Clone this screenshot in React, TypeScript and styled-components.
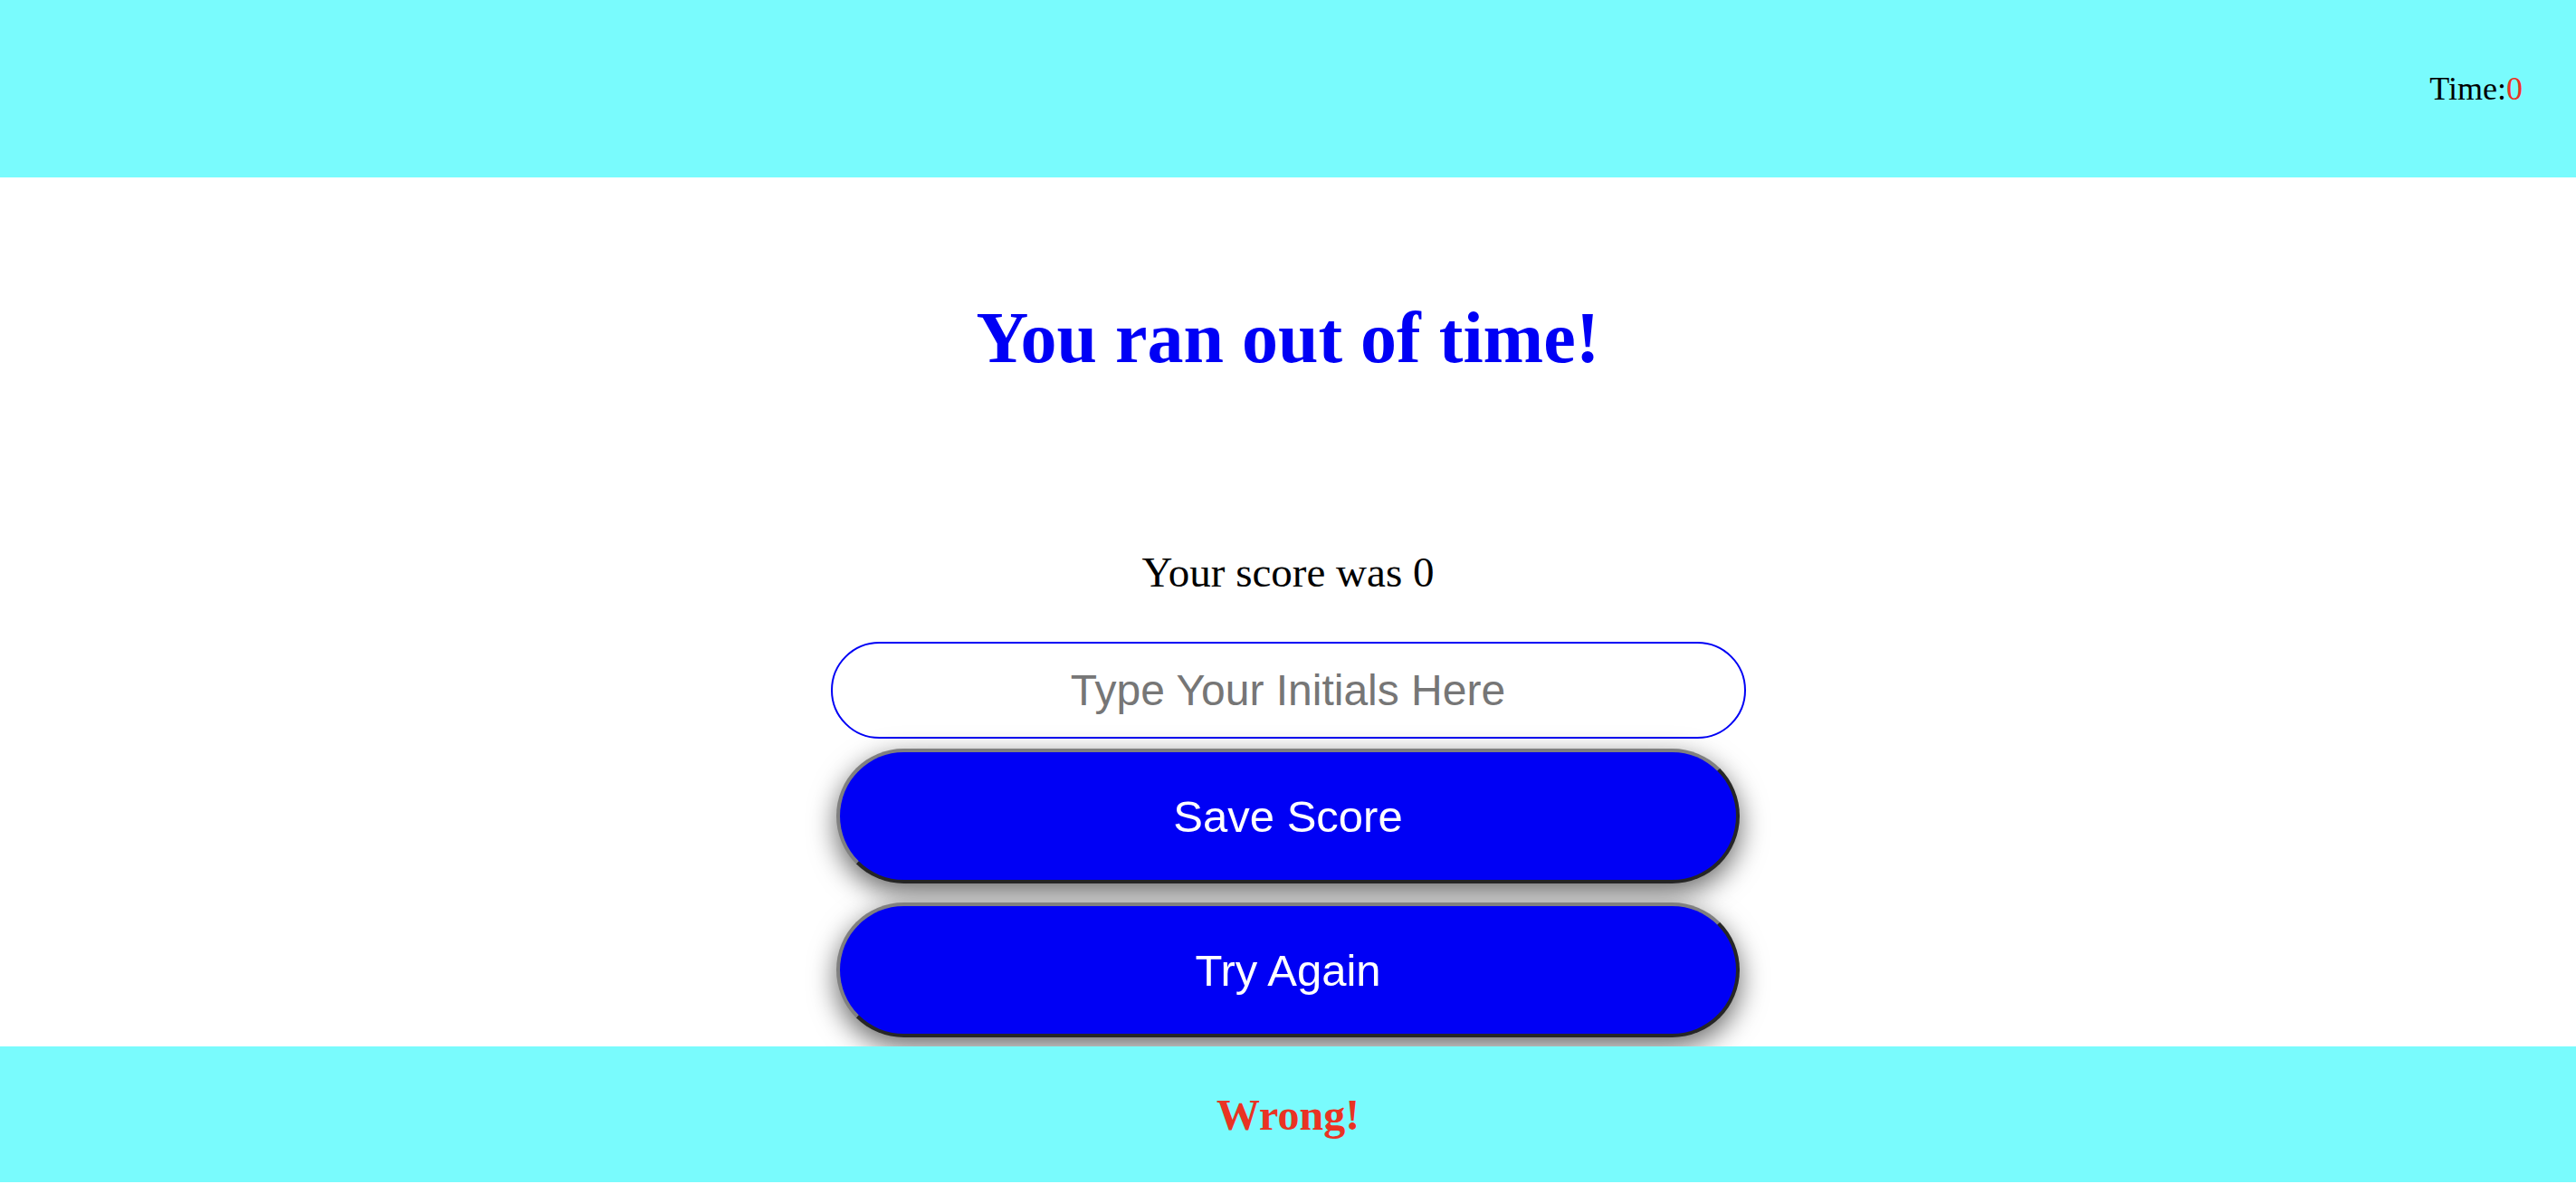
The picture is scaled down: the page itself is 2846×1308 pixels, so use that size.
import React from "react";
import styled, { createGlobalStyle } from "styled-components";

const CYAN = "#79fbfd";
const BLUE = "#0000f5";
const RED = "#ea3323";

const GlobalStyle = createGlobalStyle`
  html, body {
    margin: 0;
    padding: 0;
    background: #ffffff;
  }
  body {
    font-family: "Liberation Serif", "Times New Roman", serif;
  }
`;

const Header = styled.header`
  height: 196px;
  background: ${CYAN};
  display: flex;
  justify-content: flex-end;
  align-items: center;
  padding: 0 59px;
  box-sizing: border-box;
  font-family: "Liberation Serif", "Times New Roman", serif;
  font-size: 36px;
  color: #000;
`;

const TimeValue = styled.span`
  color: ${RED};
`;

const Main = styled.main`
  display: flex;
  flex-direction: column;
  align-items: center;
  padding-bottom: 200px;
`;

const Title = styled.h1`
  margin: 132px 0 0;
  font-family: "Liberation Serif", "Times New Roman", serif;
  font-weight: 700;
  font-size: 80px;
  line-height: normal;
  color: ${BLUE};
`;

const ScoreText = styled.p`
  margin: 186px 0 0;
  font-family: "Liberation Serif", "Times New Roman", serif;
  font-size: 47px;
  line-height: normal;
  color: #000;
`;

const InitialsInput = styled.input`
  margin-top: 50px;
  width: 1011px;
  height: 107px;
  box-sizing: border-box;
  border: 2px solid ${BLUE};
  border-radius: 54px;
  background: #fff;
  font-family: "Liberation Sans", Arial, sans-serif;
  font-size: 48px;
  text-align: center;
  color: #000;
  outline: none;
  &::placeholder {
    color: #767676;
  }
`;

const ActionButton = styled.button<{ $gap: number }>`
  margin-top: ${(p) => p.$gap}px;
  width: 998px;
  height: 149px;
  box-sizing: border-box;
  border-width: 4px;
  border-style: solid;
  border-color: #808080 #262626 #262626 #808080;
  border-radius: 75px;
  background: ${BLUE};
  color: #fff;
  font-family: "Liberation Sans", Arial, sans-serif;
  font-size: 49px;
  box-shadow: 0 10px 30px rgba(0, 0, 0, 0.6);
  cursor: pointer;
  padding: 0;
`;

const Footer = styled.footer`
  position: fixed;
  left: 0;
  right: 0;
  bottom: 2px;
  height: 150px;
  background: ${CYAN};
  display: flex;
  justify-content: center;
  align-items: center;
  font-family: "Liberation Serif", "Times New Roman", serif;
  font-weight: 700;
  font-size: 48px;
  color: ${RED};
`;

export default function App() {
  return (
    <>
      <GlobalStyle />
      <Header>
        <span>
          Time:<TimeValue>0</TimeValue>
        </span>
      </Header>
      <Main>
        <Title>You ran out of time!</Title>
        <ScoreText>Your score was 0</ScoreText>
        <InitialsInput type="text" placeholder="Type Your Initials Here" />
        <ActionButton $gap={11}>Save Score</ActionButton>
        <ActionButton $gap={21}>Try Again</ActionButton>
      </Main>
      <Footer>Wrong!</Footer>
    </>
  );
}
